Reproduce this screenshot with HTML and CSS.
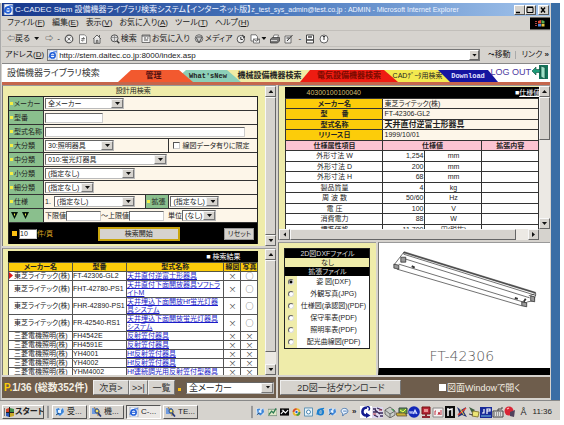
FILE: index.html
```html
<!DOCTYPE html>
<html lang="ja">
<head>
<meta charset="utf-8">
<title>C-CADEC Stem</title>
<link rel="stylesheet" href="styles.css">
</head>
<body>
<svg class="defs" width="0" height="0" aria-hidden="true">
  <symbol id="ie" viewBox="0 0 10 10"><path d="M1 0h8v10H1z" fill="#f4f8ff" stroke="#7a8aa8" stroke-width=".6"/><circle cx="4.6" cy="5.4" r="2.6" fill="none" stroke="#2360d8" stroke-width="1.5"/><path d="M2 5.3h5.4M1 7.6C2 3 6 1 9 2" fill="none" stroke="#2360d8" stroke-width="1"/></symbol>
  <symbol id="stop" viewBox="0 0 10 10"><circle cx="5" cy="5" r="3.8" fill="#eee" stroke="#555" stroke-width="1.2"/><path d="M3.5 3.5l3 3M6.5 3.5l-3 3" stroke="#777"/></symbol>
  <symbol id="refresh" viewBox="0 0 10 10"><path d="M1.5.8h5l2 2v6.6h-7z" fill="#fff" stroke="#666" stroke-width=".8"/><path d="M3.5 4.5h3L5.3 3.2M6.5 6h-3l1.2 1.5" fill="none" stroke="#444" stroke-width=".8"/></symbol>
  <symbol id="home" viewBox="0 0 10 10"><path d="M1 5l4-4 4 4M2 4.5v4.8h6V4.5M4.3 9V6.3h1.6V9M7.5 3V1" fill="#eee" stroke="#555" stroke-width=".9"/></symbol>
  <symbol id="search" viewBox="0 0 10 10"><circle cx="4.5" cy="4.3" r="3.5" fill="#ddd" stroke="#555"/><path d="M2 3.5h5M4.5 1v6.5" stroke="#777" stroke-width=".7"/><path d="M7 7l2.3 2.3" stroke="#333" stroke-width="1.4"/></symbol>
  <symbol id="fav" viewBox="0 0 10 10"><path d="M1 1h8v7.5H1z" fill="#f4f4f4" stroke="#555" stroke-width=".8"/><path d="M1 2h8M3 4h2M3 6h4M6 4h1.500" stroke="#444" stroke-width=".9"/></symbol>
  <symbol id="media" viewBox="0 0 10 10"><circle cx="5" cy="4.5" r="3.8" fill="#ccc" stroke="#555" stroke-width=".8"/><path d="M2 3l3 6 3-6M3 3h5" fill="none" stroke="#555"/></symbol>
  <symbol id="hist" viewBox="0 0 10 10"><circle cx="4.8" cy="5.2" r="3.7" fill="#eee" stroke="#555"/><path d="M4.800 3v2.500h2M6 1l3 2-2 1" fill="none" stroke="#333"/></symbol>
  <symbol id="mail" viewBox="0 0 10 10"><path d="M1 .8h5l1.500 2V7H1z" fill="#fff" stroke="#555" stroke-width=".8"/><path d="M3.500 5h6v4h-6zM3.500 5l3 2.200L9.500 5" fill="#eee" stroke="#555" stroke-width=".7"/></symbol>
  <symbol id="print" viewBox="0 0 10 10"><path d="M3 4l1-3h4.500L7.500 4" fill="#fff" stroke="#555" stroke-width=".7"/><path d="M.5 5l2-1.500h7V7l-2 2h-7z" fill="#777" stroke="#333" stroke-width=".7"/><path d="M1 6.500h6" stroke="#eee" stroke-width=".8"/></symbol>
  <symbol id="edit" viewBox="0 0 10 10"><path d="M1 2h6v7H1z" fill="#eee" stroke="#555" stroke-width=".8"/><path d="M3 7l5.500-6M2.500 4h3" stroke="#333"/></symbol>
  <symbol id="doc" viewBox="0 0 10 10"><path d="M1.500 1h7v8h-7z" fill="#fff" stroke="#444"/><path d="M3 3h4M2 6h6" stroke="#444" stroke-width="1.300"/></symbol>
  <symbol id="clock" viewBox="0 0 10 10"><circle cx="5" cy="5" r="4" fill="#fafafa" stroke="#666"/><path d="M5 2.500V6M3.800 2.500h2.400" stroke="#333"/></symbol>
  <symbol id="exit" viewBox="0 0 16 14"><path d="M7 0h9v14H7z" fill="#14735a"/><path d="M9 1l4 1.500V14l-4-2z" fill="#9fe0c8" stroke="#0c4a3a" stroke-width=".7"/><path d="M0 6l4-4v2.500h4v3H4V10z" fill="#1d9b78" stroke="#0c4a3a" stroke-width=".6"/></symbol>
  <symbol id="tool" viewBox="0 0 10 10"><path d="M0 1h9v7H0z" fill="#cfe0f0"/><path d="M1 2l3-1 1 3 3-3 1 4-4 4-3-2z" fill="#3f86d8"/><path d="M3 3h3v3H3z" fill="#e8f4ff"/><path d="M1 8l3-2" stroke="#246" /></symbol>
  <symbol id="find" viewBox="0 0 10 10"><path d="M0 1h6v6H0z" fill="#6f9be0"/><path d="M2 0l6 5-2 4z" fill="#f5d93c" stroke="#865" stroke-width=".5"/><path d="M6 6l3 3.500" stroke="#253a80" stroke-width="1.700"/><circle cx="5" cy="4" r="2" fill="#f4e26a" stroke="#248"/></symbol>
  <symbol id="globe" viewBox="0 0 10 10"><circle cx="5" cy="5" r="3" fill="none" stroke="#1c80d0" stroke-width="2"/><path d="M2 5h6M1 8c1-5 4-7 8-7" fill="none" stroke="#1c80d0" stroke-width="1.300"/></symbol>
  <symbol id="pen" viewBox="0 0 10 10"><path d="M0 2h10v7H0z" fill="#dfe8c8" stroke="#576" stroke-width=".7"/><path d="M1 8l3-4 2 2 3-5" fill="none" stroke="#2a7a50" stroke-width="1.400"/></symbol>
  <symbol id="dos" viewBox="0 0 10 10"><path d="M0 1h10v8H0z" fill="#080808"/><path d="M1 7l3-3 2 2 3-3M2 3h2" fill="none" stroke="#fff" stroke-width="1.200"/></symbol>
  <symbol id="wheel" viewBox="0 0 10 10"><circle cx="5" cy="5" r="3.300" fill="#fff" stroke="#e8b52a" stroke-width="2"/><path d="M5 1.700A3.300 3.300 0 0 0 1.700 5" fill="none" stroke="#d84a30" stroke-width="2"/><path d="M8.300 5A3.300 3.300 0 0 1 5 8.300" fill="none" stroke="#3c9a4a" stroke-width="2"/><circle cx="5" cy="5" r="1.300" fill="#2763c8"/></symbol>
  <symbol id="cam" viewBox="0 0 10 10"><path d="M.5.5h9v9h-9z" fill="#e4f1f8" stroke="#4f8ab0"/><circle cx="5" cy="5" r="2.200" fill="#fff" stroke="#3a7aa8"/></symbol>
  <symbol id="bubble" viewBox="0 0 10 10"><path d="M5 1c5 0 5 6 0 6L3 9.500V6.500C0 5 1 1 5 1z" fill="#e8f2ff" stroke="#4878b0"/><path d="M3.500 4h4" stroke="#4878b0"/></symbol>
  <symbol id="t1" viewBox="0 0 12 12"><path d="M0 0h12v12H0z" fill="#fff"/><path d="M7 1.500C1 2 1 9.500 6.500 9.500" fill="none" stroke="#141c90" stroke-width="2.600"/><path d="M6 6.500l4.500 3L6 12z" fill="#141c90"/><path d="M7 .5c3 0 3 3 1.500 4" fill="none" stroke="#141c90" stroke-width="1.500"/></symbol>
  <symbol id="t2" viewBox="0 0 12 12"><path d="M0 1h11v11H0z" fill="#dcd8ee"/><path d="M1 3h3M5 2l5 2M1 6h5M7 7h4M2 9l4 2M8 10h3M3 4l5 4" stroke="#382858" stroke-width="1.300"/><path d="M7 4h3M1 8h3" stroke="#b63846"/></symbol>
  <symbol id="t3" viewBox="0 0 12 12"><path d="M1 4l5-3 5 4v4l-5 3-5-4z" fill="#c8ccc8" stroke="#555" stroke-width=".8"/><path d="M1 4l5 4 5-3M6 8v4" fill="none" stroke="#555" stroke-width=".8"/><path d="M7 3h3v3z" fill="#4f985c"/></symbol>
  <symbol id="t4" viewBox="0 0 12 12"><path d="M3 2h8v6H3z" fill="#6aa040" stroke="#344"/><path d="M0 7h9l2 3H1z" fill="#c8b038" stroke="#543" stroke-width=".7"/><path d="M4 4l3 2 3-3" stroke="#ef5" fill="none"/></symbol>
  <symbol id="t5" viewBox="0 0 12 12"><circle cx="6" cy="6" r="5.800" fill="#1328b8"/><path d="M2 5v2h2V5M5 8l2-4 2 4M5.500 7H9" fill="none" stroke="#d5ddff" stroke-width="1.100"/></symbol>
  <symbol id="t6" viewBox="0 0 12 12"><path d="M2 1h8v7H2z" fill="#b82838" stroke="#711"/><path d="M4 3h4v3H4z" fill="#e89090"/><path d="M5 8h2v2h3v2H2v-2h3z" fill="#8c2630"/></symbol>
  <symbol id="t7" viewBox="0 0 12 12"><path d="M1 2h10v9H1z" fill="#f4f0f0" stroke="#888"/><path d="M3 9V5h1M6 9l1-3 1 3M9 4v5" fill="none" stroke="#c03848"/></symbol>
  <symbol id="t8" viewBox="0 0 12 12"><path d="M1 0h10v12H1z" fill="#0c0c0c"/><path d="M4 3v7M4 4l4-1v7M3 3h2" fill="none" stroke="#fff" stroke-width="1.500"/></symbol>
  <symbol id="t9" viewBox="0 0 12 12"><path d="M1 1l4 3 5-3-2 5 3 5-5-2-4 2 1-5z" fill="#263478"/><path d="M2 9l8-7" stroke="#e23c2c" stroke-width="1.600"/><path d="M4 3l4 6" stroke="#e8d548"/></symbol>
  <symbol id="t10" viewBox="0 0 12 12"><path d="M1 1l6 3-3 3z" fill="#3f6040"/><path d="M5 5l6 1-1 5-6-1z" fill="#ece574" stroke="#776a20" stroke-width=".8"/><path d="M1 8l4 1" stroke="#444"/></symbol>
  <symbol id="t11" viewBox="0 0 12 12"><path d="M0 1h12v11H0z" fill="#182a98"/><path d="M1 10h10" stroke="#78c4e0"/><path d="M4 3v4H2M7 8V3h3v2H7" fill="none" stroke="#fff" stroke-width="1.200"/></symbol>
  <symbol id="t12" viewBox="0 0 12 12"><path d="M1 5h10v6H1z" fill="#ddd" stroke="#444"/><path d="M2 7h8M2 9h8" stroke="#555" stroke-dasharray="1 1"/><path d="M6 5V3h4V1" fill="none" stroke="#444"/></symbol>
  <symbol id="t13" viewBox="0 0 12 12"><circle cx="5" cy="5" r="4.500" fill="#d92434"/><path d="M6 6l5-2-1 7-4-1z" fill="#50405c"/><path d="M3 3l2-1" stroke="#fbb" stroke-width="1.300"/></symbol>
</svg>

<div class="screen">
<div class="desktop">
<main class="window">
  <header class="title">
    <svg class="ic"><use href="#ie"/></svg>
    <h1>C-CADEC Stem 設備機器ライブラリ検索システム【インターネット版】<small>z_test_sys_admin@test.co.jp : ADMIN - Microsoft Internet Explorer</small></h1>
    <button class="wb" aria-label="最小化"><svg viewBox="0 0 8 8"><path d="M1 6.500h4" stroke="#000" stroke-width="1.500"/></svg></button><button class="wb" aria-label="最大化"><svg viewBox="0 0 8 8"><path d="M1 1.500h6v5H1zM1 1h6" fill="none" stroke="#000"/></svg></button><button class="wb last" aria-label="閉じる"><svg viewBox="0 0 8 8"><path d="M2 1.500l4 5M6 1.500l-4 5" stroke="#000" stroke-width="1.400"/></svg></button>
  </header>

  <nav class="menu">
    <a href="#">ファイル(<u>F</u>)</a><a href="#">編集(<u>E</u>)</a><a href="#">表示(<u>V</u>)</a><a href="#">お気に入り(<u>A</u>)</a><a href="#">ツール(<u>T</u>)</a><a href="#">ヘルプ(<u>H</u>)</a>
    <svg class="flag" viewBox="0 0 20 12"><path d="M0 0h20v12H0z"/><path d="M8 3.500l3-1V6H8z" fill="#e44c38"/><path d="M11.500 2.500l3 1V6h-3z" fill="#5cac50"/><path d="M8 6.500h3V9H8z" fill="#4c88e0"/><path d="M11.500 6.500h3V9h-3z" fill="#e8c840"/><path d="M5 4h2M5 6h2M5 8h2" stroke="#a44"/></svg>
  </nav>

  <div class="tools">
    <button class="tb">⇦戻る</button><i class="dn"></i><button class="tb">⇨</button><span>-</span>
    <svg class="ic"><use href="#stop"/></svg><svg class="ic"><use href="#refresh"/></svg><svg class="ic"><use href="#home"/></svg>
    <button class="tb gap"><svg class="ic"><use href="#search"/></svg>検索</button>
    <button class="tb"><svg class="ic"><use href="#fav"/></svg>お気に入り</button>
    <button class="tb"><svg class="ic"><use href="#media"/></svg>メディア</button>
    <svg class="ic"><use href="#hist"/></svg><span class="pair"><svg class="ic"><use href="#mail"/></svg><i class="dn"></i></span><svg class="ic"><use href="#print"/></svg><svg class="ic"><use href="#edit"/></svg><span>-</span><svg class="ic"><use href="#doc"/></svg><svg class="ic"><use href="#clock"/></svg>
  </div>

  <div class="address">
    <label for="url">アドレス(<u>D</u>)</label>
    <div class="urlbox"><svg class="ic"><use href="#ie"/></svg><input id="url" value="http://stem.daitec.co.jp:8000/index.asp"><button class="arrow" aria-label="履歴"><i class="dn"></i></button></div>
    <button class="tb">⤳移動</button><span class="links">リンク <b>»</b></span>
  </div>

  <div class="site">
    <h2>設備機器ライブラリ検索</h2>
    <nav class="tabs">
      <a class="t-adm" href="#">管理</a><a class="t-new" href="#">What'sNew</a><a class="t-mec" href="#">機械設備機器検索</a><a class="t-ele" href="#">電気設備機器検索</a><a class="t-cad" href="#">CADﾃﾞｰﾀ用検索</a><a class="t-dl" href="#">Download</a>
    </nav>
    <a class="logout" href="#"><span>LOG OUT</span><svg><use href="#exit"/></svg></a>
  </div>

  <div class="frames">
    <div class="col">
      <section class="frame f-search">
        <form class="pane">
          <h3>設計用検索</h3>
          <div class="form">
            <div class="row"><label for="maker">メーカー</label><div><span class="sel w79"><select id="maker"><option>全メーカー</option></select></span></div></div>
            <div class="row"><label for="num">型番</label><div><input id="num" class="tx w58"></div></div>
            <div class="row"><label for="name">型式名称</label><div><input id="name" class="tx w200"></div></div>
            <div class="row"><label for="big">大分類</label><div><span class="sel w69"><select id="big"><option>30:照明器具</option></select></span></div><div class="limit"><input type="checkbox" id="lim" class="ck"><label for="lim">線図データ有りに限定</label></div></div>
            <div class="row"><label for="mid">中分類</label><div><span class="sel w122"><select id="mid"><option>010:蛍光灯器具</option></select></span></div></div>
            <div class="row"><label for="small">小分類</label><div><span class="sel w90"><select id="small"><option>(指定なし)</option></select></span></div></div>
            <div class="row"><label for="fine">細分類</label><div><span class="sel w49"><select id="fine"><option>(指定なし)</option></select></span></div></div>
            <div class="row"><label for="spec">仕様</label><div class="spec">1. <span class="sel w81"><select id="spec"><option>(指定なし)</option></select></span></div><label for="ext" class="extl">拡張</label><div class="ext"><span class="sel w49"><select id="ext"><option>(指定なし)</option></select></span></div></div>
            <div class="row"><span class="tri"><svg viewBox="0 0 18 8"><path d="M0 0h7L3.500 7zM11 0h7l-3.500 7z" fill="#06150a"/><path d="M3.500 1.500v2M14.500 1.500v2" stroke="#e8e840"/></svg></span><div class="range"><label for="lo">下限値</label><input id="lo" class="tx w35"><label for="hi">～上限値</label><input id="hi" class="tx w35"><label for="unit" class="unit">単位</label><span class="sel w34"><select id="unit"><option>(なし)</option></select></span></div></div>
            <div class="submit"><i class="sq"></i><input id="per" class="tx w18" value="10"><label for="per">件/頁</label><button type="button" class="go">検索開始</button><button type="reset" class="rst">リセット</button></div>
          </div>
        </form>
        <div class="vs"><button aria-label="上"><i class="up"></i></button><span class="thumb grow"></span><button aria-label="下"><i class="dn"></i></button></div>
      </section>

      <section class="frame f-result">
        <div class="pane">
          <table class="result">
            <caption>■ 検索結果</caption>
            <colgroup><col class="c1"><col class="c2"><col class="c3"><col class="c4"><col class="c4"></colgroup>
            <thead><tr><th>メーカー名</th><th>型番</th><th>型式名称</th><th>線図</th><th>写真</th></tr></thead>
            <tbody>
              <tr class="cur"><td>東芝ライテック(株)</td><td>FT-42306-GL2</td><td><a href="#">天井直付逆富士形器具</a></td><td>×</td><td>○</td></tr>
              <tr class="two"><td>東芝ライテック(株)</td><td>FHT-42780-PS1</td><td><a href="#">天井直付下面開放器具ソフトライトM</a></td><td>×</td><td>○</td></tr>
              <tr class="two"><td>東芝ライテック(株)</td><td>FHR-42890-PS1</td><td><a href="#">天井埋込下面開放Hf蛍光灯器具システム</a></td><td>×</td><td>○</td></tr>
              <tr class="two"><td>東芝ライテック(株)</td><td>FR-42540-RS1</td><td><a href="#">天井埋込下面開放蛍光灯器具システム</a></td><td>×</td><td>○</td></tr>
              <tr><td>三菱電機照明(株)</td><td>FH4542E</td><td><a href="#">反射笠付器具</a></td><td>×</td><td>×</td></tr>
              <tr><td>三菱電機照明(株)</td><td>FH4591E</td><td><a href="#">反射笠付器具</a></td><td>×</td><td>×</td></tr>
              <tr><td>三菱電機照明(株)</td><td>YH4001</td><td><a href="#">Hf反射笠付器具</a></td><td>×</td><td>×</td></tr>
              <tr><td>三菱電機照明(株)</td><td>YH4002</td><td><a href="#">Hf反射笠付器具</a></td><td>×</td><td>×</td></tr>
              <tr><td>三菱電機照明(株)</td><td>YHM4002</td><td><a href="#">Hf連続調光用反射笠付型器具</a></td><td>×</td><td>×</td></tr>
            </tbody>
          </table>
        </div>
        <div class="vs"><button aria-label="上"><i class="up"></i></button><span class="thumb grow"></span><span class="track"></span><button aria-label="下"><i class="dn"></i></button></div>
      </section>

      <footer class="bar">
        <span class="page"><em>P.</em>1/36 (総数352件)</span><button class="b1">次頁&gt;</button><button class="b2">&gt;&gt;|</button><button class="b3">一覧</button><i class="sq dot"></i>
        <span class="sel big"><select aria-label="メーカー"><option>全メーカー</option></select></span>
      </footer>
    </div>

    <div class="col">
      <section class="frame f-spec">
        <div class="pane">
          <div class="shead"><span>40300100100040</span><a href="#">■<u>仕様値</u></a></div>
          <table class="spect">
            <colgroup><col class="s1"><col class="s2"><col class="s3"><col class="s4"></colgroup>
            <tbody class="info">
              <tr><th>メーカー名</th><td colspan="3">東芝ライテック(株)</td></tr>
              <tr><th>型　　番</th><td colspan="3">FT-42306-GL2</td></tr>
              <tr><th>型式名称</th><td colspan="3"><b>天井直付逆富士形器具</b></td></tr>
              <tr><th>リリース日</th><td colspan="3">1999/10/01</td></tr>
            </tbody>
            <tbody class="vals">
              <tr><th>仕様属性項目</th><th colspan="2">仕様値</th><th>拡張内容</th></tr>
              <tr><td>外形寸法 W</td><td>1,254</td><td>mm</td><td></td></tr>
              <tr><td>外形寸法 D</td><td>200</td><td>mm</td><td></td></tr>
              <tr><td>外形寸法 H</td><td>68</td><td>mm</td><td></td></tr>
              <tr><td>製品質量</td><td>4</td><td>kg</td><td></td></tr>
              <tr><td>周 波 数</td><td>50/60</td><td>Hz</td><td></td></tr>
              <tr><td>電 圧</td><td>100</td><td>V</td><td></td></tr>
              <tr><td>消費電力</td><td>88</td><td>W</td><td></td></tr>
              <tr><td>標準価格</td><td>11,700</td><td>円(税抜)</td><td></td></tr>
            </tbody>
          </table>
        </div>
        <div class="vs"><button aria-label="上"><i class="up"></i></button><span class="thumb short"></span><span class="grow"></span><button aria-label="下"><i class="dn"></i></button></div>
        <div class="hs"><button aria-label="左"><i class="lt"></i></button><span class="thumb grow"></span><span class="track"></span><button aria-label="右"><i class="rt"></i></button></div>
      </section>

      <div class="lower">
        <section class="frame files">
          <div class="flist">
            <h4>2D図DXFファイル</h4><p>なし</p><h4>拡張ファイル</h4>
            <div><input type="radio" name="f" id="f1" checked><label for="f1">姿 図(DXF)</label></div>
            <div><input type="radio" name="f" id="f2"><label for="f2">外観写真(JPG)</label></div>
            <div><input type="radio" name="f" id="f3"><label for="f3">仕様図(承認図)(PDF)</label></div>
            <div><input type="radio" name="f" id="f4"><label for="f4">保守率表(PDF)</label></div>
            <div><input type="radio" name="f" id="f5"><label for="f5">照明率表(PDF)</label></div>
            <div><input type="radio" name="f" id="f6"><label for="f6">配光曲線図(PDF)</label></div>
          </div>
        </section>
        <section class="frame draw">
          <svg viewBox="0 0 172 76" class="lamp">
            <g fill="none" stroke="#333" stroke-width=".7">
              <path d="M25 9L158 50" stroke="#777" stroke-width="2"/>
              <path d="M25 9L158 50v2.500L25 11z"/>
              <path d="M25 9l-10 13M24 15l128 40M20 21l128 39M18 26l126 37M158 52l-2 6-6 1-4 3M151 53l6-2"/>
              <path d="M22 14h5v5h-5zM15 21l5 1v4l-5-1zM144 59l5 1v4l-5-1zM153 53l4 1v5l-4-1z" fill="#999" stroke="#222"/>
              <path d="M33 23l3 1.500M137 55l3 1M146 59l2-3" stroke-width="1.800"/>
            </g>
          </svg>
          <p>FT-42306</p>
        </section>
      </div>

      <footer class="bar right">
        <button class="dl">2D図一括ダウンロード</button>
        <span class="open"><input type="checkbox" id="ow" class="ck flat"><label for="ow">図面Windowで開く</label></span>
      </footer>
    </div>
  </div>
</main>
</div>

<footer class="taskbar">
  <button class="start"><svg class="ic" viewBox="0 0 10 10"><path d="M0 2h1M0 4h1M0 6h1M0 8h1" stroke="#222"/><path d="M2 2l3-1v4H2z" fill="#d8442c"/><path d="M6 1l4 1v3H6z" fill="#3e8c48"/><path d="M2 6h3v4L2 9z" fill="#2a58b8"/><path d="M6 6h4v3l-4 1z" fill="#c8a828"/><path d="M5.500 0v10M2 5.500h8" stroke="#222"/></svg>スタート</button>
  <span class="sep"></span>
  <button class="task"><svg class="ic"><use href="#tool"/></svg>受...</button>
  <button class="task"><svg class="ic"><use href="#find"/></svg>機...</button>
  <button class="task on"><svg class="ic"><use href="#ie"/></svg>C-...</button>
  <button class="task"><svg class="ic"><use href="#find"/></svg>TE...</button>
  <span class="grow"></span>
  <span class="sep"></span>
  <div class="quick"><svg><use href="#tool"/></svg><svg><use href="#pen"/></svg><svg><use href="#dos"/></svg><svg><use href="#wheel"/></svg><svg><use href="#cam"/></svg><svg><use href="#globe"/></svg><svg><use href="#tool"/></svg><svg><use href="#bubble"/></svg><b>»</b></div>
  <div class="tray"><svg><use href="#t1"/></svg><svg><use href="#t2"/></svg><svg><use href="#t3"/></svg><svg><use href="#t4"/></svg><svg><use href="#t5"/></svg><svg><use href="#t6"/></svg><svg><use href="#t7"/></svg><svg><use href="#t8"/></svg><svg><use href="#t9"/></svg><svg><use href="#t10"/></svg><svg><use href="#t11"/></svg><svg><use href="#t12"/></svg><svg><use href="#t13"/></svg></div>
  <span class="ime">Å</span><time>11:36</time>
</footer>
</div>
</body>
</html>
```
FILE: styles.css
```css
* { box-sizing: border-box; }
body, h1, h2, h3, h4, p { margin: 0; }
body {
  background: #fff;
  color: #222;
  font-family: "Liberation Sans", "Noto Sans CJK JP", sans-serif;
  font-size: 7px;
  line-height: 8px;
  font-feature-settings: "palt";
}
button, input, select {
  font: inherit;
  font-feature-settings: inherit;
  color: inherit;
  margin: 0;
  padding: 0;
  border: 0;
  border-radius: 0;
  background: none;
  min-width: 0;
}
button { white-space: nowrap; }
a { color: inherit; text-decoration: none; }
svg { display: block; flex: none; }
i, em { font-style: normal; }
.defs { position: absolute; }
.ic { width: 10px; height: 10px; }
.grow { flex: 1; }

.screen { padding: 3px 4px 0 0; }
.desktop { background: #3a6ea5; padding-right: 9px; }
.window { background: #d6d3ce; padding: 0 1px 2px 1px; border-left: 1px solid #aaa; }

/* small triangles */
.dn, .up, .lt, .rt { display: block; background: #111; }
.dn, .up { width: 5px; height: 3px; }
.lt, .rt { width: 3px; height: 5px; }
.dn { clip-path: polygon(0 0, 100% 0, 50% 100%); }
.up { clip-path: polygon(0 100%, 100% 100%, 50% 0); }
.lt { clip-path: polygon(100% 0, 100% 100%, 0 50%); }
.rt { clip-path: polygon(0 0, 0 100%, 100% 50%); }

/* browser chrome */
.title {
  display: flex;
  align-items: center;
  height: 13px;
  background: linear-gradient(90deg, #16378c, #4a78bd 50%, #a2c4ec);
}
.title .ic { width: 11px; height: 11px; margin: 0 1px; }
.title h1 { flex: 1; color: #eef3ff; font-size: 8px; font-weight: 400; line-height: 13px; white-space: nowrap; overflow: hidden; }
.title small { font-size: 7px; }
.wb { width: 11px; height: 10px; background: #d6d3ce; border: 1px solid; border-color: #fff #555 #555 #fff; }
.wb svg { width: 8px; height: 8px; }
.wb.last { margin: 0 1px 0 2px; }

.menu { display: flex; align-items: center; gap: 7px; height: 15px; padding-left: 5px; font-size: 8px; border-bottom: 1px solid #c2bfba; white-space: nowrap; }
.flag { width: 20px; height: 13px; margin-left: auto; }

.tools { display: flex; align-items: center; gap: 4px; height: 15px; padding-left: 5px; font-size: 8px; }
.tools .tb, .pair { display: flex; align-items: center; gap: 1px; }
.tools .gap { margin-left: 4px; }
.tools > .dn { margin-right: 2px; }

.address { display: flex; align-items: center; gap: 3px; height: 17px; padding-left: 3px; border-top: 1px solid #c2bfba; font-size: 8px; white-space: nowrap; }
.urlbox { display: flex; align-items: center; flex: 1; height: 12px; background: #fff; border: 1px solid #777; }
.urlbox input { flex: 1; height: 10px; padding-left: 1px; }
.arrow { display: flex; align-items: center; justify-content: center; width: 10px; height: 10px; background: #d6d3ce; border: 1px solid; border-color: #fff #666 #666 #fff; }
.address .tb { padding: 0 5px; border-right: 1px solid #aaa; }
.links { padding: 0 1px 0 2px; }

/* site header */
.site { display: flex; height: 22px; background: #fff; border-top: 1px solid #888; border-bottom: 3px solid #c5664c; padding-left: 5px; }
.site h2 { width: 111px; font-size: 9px; font-weight: 400; line-height: 18px; color: #333; white-space: nowrap; }
.tabs { display: flex; align-items: flex-end; }
.tabs a {
  position: relative;
  height: 12px;
  font-size: 8px;
  font-weight: 700;
  line-height: 12px;
  text-align: center;
  white-space: nowrap;
  clip-path: polygon(13px 0, calc(100% - 14px) 0, 100% 100%, 0 100%);
}
.tabs .t-adm { width: 75px; padding-right: 4px; background: #f2592f; z-index: 6; color: #511; }
.tabs .t-new { width: 68px; margin-left: -20px; padding-left: 2px; background: #8ccfb8; z-index: 5; font-family: "Liberation Mono", monospace; font-size: 7px; }
.tabs .t-mec { width: 93px; margin-left: -18px; background: #f1eca4; z-index: 4; clip-path: polygon(0 0, 100% 0, 100% 100%, 0 100%); }
.tabs .t-ele { width: 98px; margin-left: -16px; background: #ee1c12; z-index: 7; color: #7a0a00; clip-path: polygon(10px 0, calc(100% - 14px) 0, 100% 100%, 0 100%); }
.tabs .t-cad { width: 67px; margin-left: -15px; padding-left: 2px; background: #f3e94f; z-index: 6; clip-path: polygon(0 0, calc(100% - 12px) 0, 100% 100%, 0 100%); font-size: 7px; font-weight: 400; }
.tabs .t-dl { width: 60px; margin-left: -12px; background: #1414a0; color: #e4e4ff; z-index: 5; clip-path: polygon(0 0, calc(100% - 10px) 0, 100% 100%, 0 100%); font-family: "Liberation Mono", monospace; font-size: 7px; }
.logout { display: flex; align-items: center; gap: 1px; margin: 0 2px 0 auto; padding-bottom: 2px; color: #4c3aa0; font-size: 9px; white-space: nowrap; }
.logout span { margin-left: -12px; }
.logout svg { width: 16px; height: 14px; }

/* frames */
.frames { display: grid; grid-template-columns: 275fr 272fr; gap: 2px; }
.col { display: flex; flex-direction: column; gap: 2px; min-width: 0; }
.frame { background: #efecaa; overflow: hidden; border-left: 1px solid #777; border-top: 1px solid #999; }
.f-search, .f-result { display: grid; grid-template-columns: 1fr 11px; }
.f-search { height: 161px; }
.f-result { height: 127px; }
.pane { min-width: 0; min-height: 0; overflow: hidden; }
.f-search .pane, .f-result .pane { padding: 0 7px 0 5px; }
.f-result .pane { padding-top: 2px; }

.vs, .hs { display: flex; background: #ece9e4; }
.vs { flex-direction: column; }
.vs button, .hs button, .thumb { background: #d6d3ce; border: 1px solid; border-color: #f8f8f8 #666 #666 #f8f8f8; }
.vs button, .hs button { display: flex; align-items: center; justify-content: center; width: 11px; height: 11px; }
.f-result .track { height: 12px; }
.thumb.short { height: 43px; }
.hs .track { width: 12px; }

/* search form */
.f-search h3 { font-size: 7px; font-weight: 400; line-height: 10px; text-align: center; }
.form { border: 1px solid #222; border-bottom: 0; }
.row { display: flex; height: 14px; border-bottom: 1px solid #333; background: #fdf6e9; }
.row > div { display: flex; align-items: center; flex: 1; padding-left: 1px; white-space: nowrap; }
.row > label, .tri { display: flex; align-items: center; width: 35px; background: #8abf8d; border-right: 1px solid #333; white-space: nowrap; }
.row > label::before { content: ""; width: 3px; height: 3px; margin: 0 1px; background: #f3ee45; }
.row > .extl { width: 24px; border-left: 1px solid #333; }
.row > .limit { flex: none; width: 89px; border-left: 1px solid #333; padding-left: 4px; gap: 2px; }
.row > .spec { gap: 3px; }
.row > .ext { flex: none; width: 88px; }
.tri { padding-left: 2px; }
.tri svg { width: 18px; height: 8px; }
.range .unit { margin-left: 4px; }
.tx { height: 10px; background: #fff; border: 1px solid; border-color: #666 #ccc #ccc #666; }
.sel { position: relative; display: block; height: 11px; background: #fff; border: 1px solid; border-color: #666 #bbb #bbb #666; }
.sel select { display: block; appearance: none; width: 100%; height: 9px; padding-left: 2px; line-height: 9px; }
.sel::before, .sel::after { content: ""; position: absolute; pointer-events: none; }
.sel::before { right: 0; top: 0; bottom: 0; width: 10px; background: #d6d3ce; border: 1px solid; border-color: #f4f4f4 #777 #777 #f4f4f4; }
.sel::after { right: 3px; top: 3px; width: 5px; height: 3px; background: #111; clip-path: polygon(0 0, 100% 0, 50% 100%); }
.w18 { width: 18px; }
.w34 { width: 34px; }
.w35 { width: 35px; }
.w49 { width: 49px; }
.w58 { width: 58px; }
.w69 { width: 69px; }
.w79 { width: 79px; }
.w81 { width: 81px; }
.w90 { width: 90px; }
.w122 { width: 122px; }
.w200 { width: 200px; }
.ck { appearance: none; flex: none; width: 7px; height: 7px; background: #fff; border: 1px solid; border-color: #555 #ccc #ccc #555; }
.ck.flat { border-color: #fff; }
.sq { display: block; width: 5px; height: 5px; background: #fbbf12; }
.submit { display: flex; align-items: center; height: 21px; padding: 0 3px; background: #000; color: #d8a020; white-space: nowrap; }
.submit .tx { margin-left: 2px; color: #222; }
.go, .rst { background: #d6d3ce; color: #222; border: 1px solid #999; }
.go { width: 82px; height: 14px; margin: 0 auto; border: 2px solid #c9a50c; }
.rst { width: 30px; height: 12px; }

/* results */
table { width: 100%; table-layout: fixed; border-collapse: collapse; }
th, td { padding: 0; overflow: hidden; white-space: nowrap; }
.result { background: #fff; }
.result caption { height: 11px; padding-right: 18px; line-height: 11px; text-align: right; color: #fff; background: #000; }
.result th { height: 9px; background: #fccc0a; border: 1px solid #554; }
.result td { height: 9px; line-height: 8px; border: 1px solid #555; }
.result .two td { height: 17px; }
.result td:nth-child(1) { padding-left: 5px; }
.result .cur td:first-child::before { content: ""; float: left; width: 4px; height: 7px; margin-left: -5px; background: #e01818; clip-path: polygon(0 0, 100% 50%, 0 100%); }
.result td:nth-child(3) { white-space: normal; }
.result td:nth-child(n+4) { text-align: center; color: #444; font-family: "Noto Sans CJK JP", sans-serif; font-size: 8px; }
.result a { color: #1c1cc8; text-decoration: underline; }
.c1 { width: 64px; }
.c2 { width: 54px; }
.c4 { width: 17px; }

/* bottom bars */
.bar { display: flex; align-items: center; height: 21px; padding: 0 2px; background: #6e5d4c; color: #f4efe4; white-space: nowrap; }
.bar button { height: 15px; background: #d6d3ce; color: #333; border: 1px solid; border-color: #eee #777 #777 #eee; font-size: 9px; line-height: 12px; }
.page { width: 89px; overflow: hidden; font-size: 10px; font-weight: 700; line-height: 12px; }
.page em { color: #fccc0a; }
.b1 { width: 36px; }
.b2 { width: 19px; }
.b3 { width: 27px; }
.sq.dot { width: 3px; height: 3px; margin: 4px 5px 0 3px; }
.sel.big { flex: 1; height: 12px; font-size: 9px; color: #222; }
.sel.big select { height: 10px; line-height: 10px; }
.bar .dl { width: 121px; font-size: 9px; }
.open { display: flex; align-items: center; gap: 1px; margin: 0 auto; padding-left: 10px; font-size: 9px; }

/* specification */
.f-spec { display: grid; grid-template: 143px 11px / 1fr 11px; height: 155px; background: #d6d3ce; }
.f-spec .pane { padding: 1px 0 0 6px; background: #efecaa; }
.f-spec .hs { grid-column: 1; }
.shead { display: flex; justify-content: space-between; height: 11px; padding-left: 21px; line-height: 11px; background: #000; color: #d3be72; overflow: hidden; white-space: nowrap; }
.shead a { width: 24px; color: #fff; }
.spect { background: #fff; }
.spect th, .spect td { height: 10px; border: 1px solid #333; text-align: center; line-height: 8px; }
.spect tr:nth-child(even) > * { height: 11px; }
.spect .info th { background: #fccc0a; }
.spect .info td { background: #fdf6e9; text-align: left; padding-left: 1px; }
.spect b { font-size: 8px; }
.spect .vals th { background: #fcc4d2; }
.spect .vals td:nth-child(2) { text-align: right; padding-right: 1px; }
.s1 { width: 97px; }
.s2 { width: 42px; }
.s3 { width: 57px; }

/* files and drawing */
.lower { display: grid; grid-template-columns: 98px 1fr; gap: 2px; height: 133px; }
.files { padding: 5px 6px 0 5px; }
.flist { border: 1px solid #222; text-align: center; white-space: nowrap; }
.flist h4 { height: 9px; line-height: 9px; font-weight: 400; background: #000; color: #ddd; }
.flist p { height: 9px; line-height: 9px; }
.flist div { display: flex; align-items: center; height: 12px; }
.flist label { flex: 1; height: 12px; line-height: 12px; background: #fff; }
.flist input { appearance: none; width: 6px; height: 6px; margin: 0 3px; border: 1px solid; border-color: #666 #ddd #ddd #666; border-radius: 50%; background: #fff; }
.flist input:checked { background: radial-gradient(#000 1px, #fff 2px); }
.draw { display: flex; flex-direction: column; background: #fff; border-bottom: 7px solid #000; }
.lamp { width: 100%; height: 76px; }
.draw p { margin-top: 26px; padding-right: 6px; font-family: "DejaVu Sans", sans-serif; font-weight: 200; font-size: 14px; line-height: 22px; text-align: center; color: #555; }

/* taskbar */
.taskbar { display: flex; align-items: center; height: 20px; padding: 2px 8px 0 2px; background: #d6d3ce; border-top: 1px solid #888; font-size: 8px; white-space: nowrap; overflow: hidden; }
.taskbar button { display: flex; align-items: center; gap: 2px; height: 14px; padding: 0 1px; border: 1px solid; border-color: #fff #555 #555 #fff; overflow: hidden; }
.taskbar .start { width: 42px; gap: 1px; font-weight: 700; }
.sep { width: 2px; height: 14px; margin: 0 3px; border: 1px solid; border-color: #fff #999 #fff #999; }
.taskbar .task { width: 35px; margin-right: 2px; padding-left: 2px; }
.taskbar .on { background: #ebe9e6; border-color: #555 #fff #fff #555; }
.quick, .tray { display: flex; align-items: center; }
.quick { gap: 3px; margin-right: 3px; }
.quick svg { width: 9px; height: 10px; }
.tray svg { width: 12px; height: 12px; }
.ime { margin: 0 6px 0 5px; font-size: 9px; }
```
